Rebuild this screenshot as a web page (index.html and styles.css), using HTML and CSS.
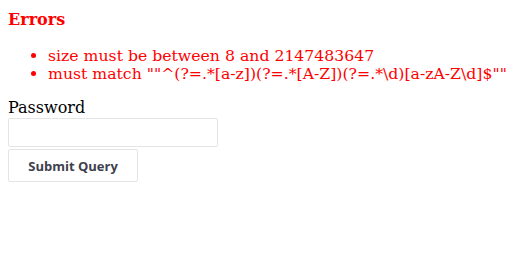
FILE: index.html
```html
<!DOCTYPE html>
<html>
<head>
<meta charset="utf-8">
<link rel="stylesheet" href="styles.css">
</head>
<body>
<form class="form">
  <div class="errors">
    <h3 class="errors-title">Errors</h3>
    <ul class="errors-list">
      <li>size must be between 8 and 2147483647</li>
      <li>must match ""^(?=.*[a-z])(?=.*[A-Z])(?=.*\d)[a-zA-Z\d]$""</li>
    </ul>
  </div>
  <label class="label" for="pw">Password</label>
  <input class="input" id="pw" type="password">
  <button class="button" type="submit">Submit Query</button>
</form>
</body>
</html>
```
FILE: styles.css
```css
body {
  margin: 8px;
  font-family: "DejaVu Serif", serif;
  font-size: 16px;
  background: #fff;
}
.form {
  display: flex;
  flex-direction: column;
  align-items: flex-start;
}
.errors {
  color: #ff0000;
}
.errors-title {
  margin: 0;
  font-size: 16px;
  font-weight: bold;
  line-height: 23px;
}
.errors-list {
  margin: 16px 0 15px;
  padding-left: 40px;
  font-size: 15.7px;
  line-height: 18px;
}
.label {
  display: block;
  line-height: 20px;
}
.input {
  box-sizing: border-box;
  width: 210px;
  height: 29px;
  margin: 0;
  border: 1px solid #e4e4e4;
  border-radius: 2px;
  background: #fff;
  padding: 0 8px;
}
.button {
  box-sizing: border-box;
  width: 130px;
  height: 33px;
  margin: 2px 0 0;
  border: 1px solid #e4e4e4;
  border-radius: 2px;
  background: #fff;
  font-family: "Open Sans", sans-serif;
  font-weight: bold;
  font-size: 13px;
  color: #3d414c;
  padding: 0;
}
```
